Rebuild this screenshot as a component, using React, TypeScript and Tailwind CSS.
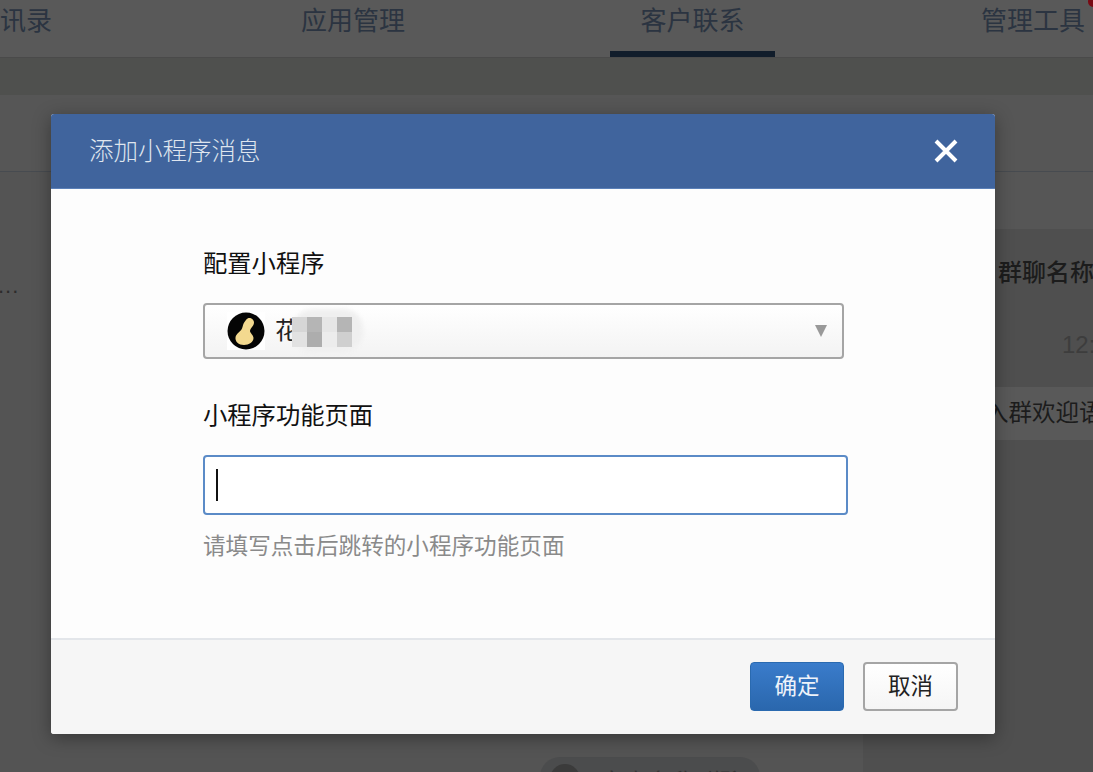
import React from 'react'

const font = { fontFamily: '"Liberation Sans", "Noto Sans CJK SC", sans-serif' }

const NavItem = ({ label, active }: { label: string; active?: boolean }) => (
  <div className={active ? 'relative flex h-[57px] w-[165px] justify-center border-b-[6px] border-[#111d2b] pt-[3px]' : 'flex h-[57px] justify-center pt-[3px]'}>
    <span className="whitespace-nowrap text-[26px] leading-[36px] text-[#2b3441]">{label}</span>
  </div>
)

const Peanut = () => (
  <svg width="38" height="38" viewBox="0 0 38 38">
    <rect width="38" height="38" fill="#fff" />
    <circle cx="19" cy="19" r="18.500" fill="#050505" />
    <path
      d="M21.500 6C24 5.500 27 7.500 27 10.500C27 14 23 16 23 19C23 21 26.500 23 26.500 26C26.500 30 22 33 17 33C11.500 33 8 29.500 8.500 25.500C9 21.500 13.500 20 15 16.500C16 14 16 12 17.500 10C18.500 8.500 19.500 7 21.500 6Z"
      fill="#f3d98f"
    />
  </svg>
)

export default function App() {
  return (
    <div className="relative h-[772px] w-[1093px] overflow-hidden bg-[#4f4f4f]" style={font}>
      {/* page behind the overlay */}
      <div className="flex h-[58px] border-b border-[#4a4a4a] bg-[#595959]">
        <NavItem label="讯录" />
        <div className="ml-[249px]"><NavItem label="应用管理" /></div>
        <div className="ml-[205px]"><NavItem label="客户联系" active /></div>
        <div className="ml-[206px]"><NavItem label="管理工具" /></div>
      </div>
      <div className="h-[37px] bg-[#4f504e]" />
      <div className="h-[77px] border-b border-[#474b50] bg-[#565656]" />
      <div className="flex">
        <div className="h-[600px] w-[863px] shrink-0 bg-[#545454] pt-[100px]">
          <div className="-ml-[2px] text-[22px] leading-[28px] tracking-[1px] text-[#2c2c2c]">...</div>
        </div>
        <div className="h-[600px] flex-1 bg-[#4f4f4f]">
          <div className="h-[57px] bg-[#565656]" />
          <div className="mt-[28px] whitespace-nowrap pl-[135px] text-[24px] font-medium leading-[32px] text-[#1c1c1c]">群聊名称</div>
          <div className="mt-[40px] whitespace-nowrap pl-[199px] text-[24px] leading-[32px] text-[#3d3d3d]">12:</div>
          <div className="mt-[26px] flex h-[53px] items-center whitespace-nowrap bg-[#595959] pl-[122px] text-[23.500px] text-[#1c1c1c]">入群欢迎语</div>
        </div>
      </div>
      <div className="absolute left-[540px] top-[757px] flex h-[40px] w-[220px] items-start rounded-[20px] bg-[#4b4c4d] pl-[10px] pt-[7px]">
        <div className="h-[30px] w-[30px] shrink-0 rounded-full bg-[#3b3b3b]" />
        <span className="ml-[20px] mt-[2px] whitespace-nowrap text-[24px] leading-[34px] text-[#333]">客户名称群聊</span>
      </div>
      <div className="absolute left-[1088px] top-[-4px] h-[11px] w-[11px] rounded-full bg-[#7a0a14]" />

      {/* dialog */}
      <div className="absolute left-[51px] top-[114px] flex h-[620px] w-[944px] flex-col overflow-hidden rounded-[3px] bg-[#fdfdfd] shadow-[0_4px_18px_rgba(0,0,0,0.35)]">
        <div className="flex h-[75px] items-center justify-between border-b border-[#5b80b8] bg-[#40649d] pl-[38px] pr-[36px]">
          <span className="pt-[2px] text-[24.500px] leading-[34px] font-light text-[#dfe5ee]">添加小程序消息</span>
          <svg width="26" height="26" viewBox="0 0 26 26">
            <path d="M3 3 L23 23 M23 3 L3 23" stroke="#fff" strokeWidth="4" />
          </svg>
        </div>
        <div className="flex-1 pl-[152px] pt-[57px]">
          <div className="text-[24.300px] leading-[36px] text-[#111]">配置小程序</div>
          <div className="relative mt-[21px] flex h-[56px] w-[641px] items-center rounded-[4px] border-2 border-[#a5a5a5] bg-gradient-to-b from-white to-[#f3f3f3] pl-[22px]">
            <Peanut />
            <span className="ml-[10px] text-[24px] text-[#222]">花</span>
            <div className="absolute left-[88px] top-[4px] h-[43px] w-[70px] rounded-[20px] bg-[#efefef] blur-[2px]" />
            <div className="absolute left-[87px] top-[12px] grid grid-cols-4">
              <div className="h-[15px] w-[15px] bg-[#d6d6d6]" />
              <div className="h-[15px] w-[15px] bg-[#b5b5b5]" />
              <div className="h-[15px] w-[15px] bg-[#e6e6e6]" />
              <div className="h-[15px] w-[15px] bg-[#b5b5b5]" />
              <div className="h-[15px] w-[15px] bg-[#e2e2e2]" />
              <div className="h-[15px] w-[15px] bg-[#adadad]" />
              <div className="h-[15px] w-[15px] bg-[#ececec]" />
              <div className="h-[15px] w-[15px] bg-[#cfcfcf]" />
            </div>
            <div className="absolute right-[15px] top-[20px] h-0 w-0 border-x-[6px] border-t-[12px] border-x-transparent border-t-[#999]" />
          </div>
          <div className="mt-[39px] text-[24.300px] leading-[36px] text-[#111]">小程序功能页面</div>
          <div className="mt-[21px] flex h-[60px] w-[645px] items-center rounded-[4px] border-2 border-[#5b8bc7] bg-white pl-[11px]">
            <div className="h-[32px] w-[2px] bg-[#111]" />
          </div>
          <div className="mt-[14px] text-[22.600px] leading-[36px] text-[#8a8a8a]">请填写点击后跳转的小程序功能页面</div>
        </div>
        <div className="flex h-[96px] items-start justify-end gap-[19px] border-t-2 border-[#e3e6ea] bg-[#f6f6f6] pr-[37px] pt-[22px]">
          <button className="h-[49px] w-[94px] rounded-[4px] border border-[#2a6ab0] bg-gradient-to-b from-[#3a7ccb] to-[#2a67ad] text-[22.500px] text-[#eef3fa]">确定</button>
          <button className="h-[49px] w-[95px] rounded-[4px] border-2 border-[#a5a5a5] bg-gradient-to-b from-white to-[#f5f5f5] text-[22.500px] text-[#222]">取消</button>
        </div>
      </div>
    </div>
  )
}
